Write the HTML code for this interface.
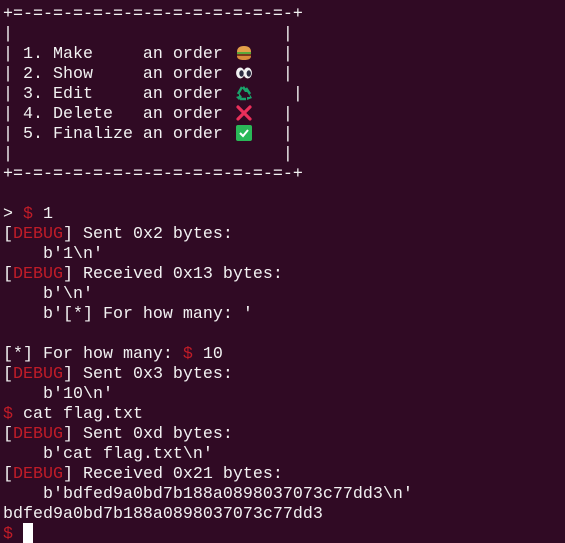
<!DOCTYPE html>
<html><head><meta charset="utf-8"><style>
html,body{margin:0;padding:0;background:#300a24;width:565px;height:543px;overflow:hidden}
pre{margin:0;padding:5px 0 0 3px;font-family:"Liberation Mono",monospace;font-size:16.67px;line-height:20px;color:#f2f2f2;white-space:pre}
.r{color:#c01c28}
.e{display:inline-block;width:20px;height:20px;vertical-align:top;position:relative}
.e svg{position:absolute;left:3px;top:0px;width:16px;height:16px}
.cur{display:inline-block;width:10px;height:20px;background:#fff;vertical-align:top;margin-top:-2px}
</style></head><body><pre>+=-=-=-=-=-=-=-=-=-=-=-=-=-=-+
|                           |
| 1. Make     an order <span class="e"><svg width="16" height="16" viewBox="0 0 16 16"><path d="M1 7 Q1 1 8 1 Q15 1 15 7Z" fill="#e3a04a"/><rect x="1" y="7" width="14" height="2" fill="#5ba83a"/><rect x="1" y="9" width="14" height="2" fill="#7a3a1e"/><path d="M1 11 H15 Q15 15 8 15 Q1 15 1 11Z" fill="#d98a3a"/></svg></span>   |
| 2. Show     an order <span class="e"><svg width="16" height="16" viewBox="0 0 16 16"><ellipse cx="4.3" cy="8" rx="4.2" ry="5.5" fill="#f2f2f2"/><ellipse cx="11.7" cy="8" rx="4.2" ry="5.5" fill="#f2f2f2"/><ellipse cx="5.5" cy="8.5" rx="2.2" ry="3.2" fill="#2a2a40"/><ellipse cx="12.8" cy="8.5" rx="2.2" ry="3.2" fill="#2a2a40"/></svg></span>   |
| 3. Edit     an order <span class="e"><svg width="16" height="16" viewBox="0 0 16 16"><path d="M8 1 L12 7 L9 7 L6 3Z M13 8 L16 13 L11 15 L11 12 L14 12Z M3 8 L6 12 L3 15 L0 12 L3 11Z" fill="#1aa36b"/><path d="M6 2 L2 9 M10 14 L4 14 M14 9 L10 3" stroke="#1aa36b" stroke-width="2.5" fill="none"/></svg></span>    |
| 4. Delete   an order <span class="e"><svg width="16" height="16" viewBox="0 0 16 16"><path d="M2 2 L14 14 M14 2 L2 14" stroke="#ea2f5a" stroke-width="3.2" stroke-linecap="round"/></svg></span>   |
| 5. Finalize an order <span class="e"><svg width="16" height="16" viewBox="0 0 16 16"><rect x="0" y="0" width="16" height="16" rx="2" fill="#2ab858"/><path d="M4 8 L7 11 L12 5" stroke="#fff" stroke-width="2" fill="none"/></svg></span>   |
|                           |
+=-=-=-=-=-=-=-=-=-=-=-=-=-=-+

&gt; <span class="r">$</span> 1
[<span class="r">DEBUG</span>] Sent 0x2 bytes:
    b'1\n'
[<span class="r">DEBUG</span>] Received 0x13 bytes:
    b'\n'
    b'[*] For how many: '

[*] For how many: <span class="r">$</span> 10
[<span class="r">DEBUG</span>] Sent 0x3 bytes:
    b'10\n'
<span class="r">$</span> cat flag.txt
[<span class="r">DEBUG</span>] Sent 0xd bytes:
    b'cat flag.txt\n'
[<span class="r">DEBUG</span>] Received 0x21 bytes:
    b'bdfed9a0bd7b188a0898037073c77dd3\n'
bdfed9a0bd7b188a0898037073c77dd3
<span class="r">$</span> <span class="cur"></span></pre></body></html>
